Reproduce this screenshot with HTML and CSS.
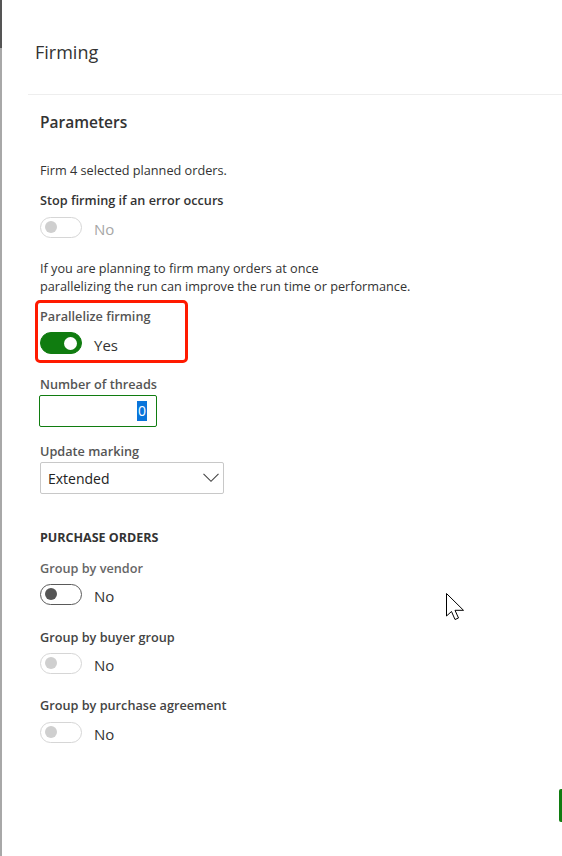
FILE: index.html
```html
<!DOCTYPE html>
<html>
<head>
<meta charset="utf-8">
<link rel="stylesheet" href="styles.css">
</head>
<body>
<div class="page">
  <div class="edge"></div>
  <div class="main">
    <h1 class="title">Firming</h1>
    <div class="divider"></div>
    <div class="section">
      <h2 class="sec-title">Parameters</h2>
      <p class="text t-firm">Firm 4 selected planned orders.</p>
      <div class="label l-stop dark">Stop firming if an error occurs</div>
      <div class="toggle-row r-stop">
        <span class="toggle off disabled"><span class="knob"></span></span>
        <span class="state muted">No</span>
      </div>
      <p class="text t-desc">If you are planning to firm many orders at once<br>parallelizing the run can improve the run time or performance.</p>
      <div class="highlight">
        <div class="label mid">Parallelize firming</div>
        <div class="toggle-row r-par">
          <span class="toggle on"><span class="knob"></span></span>
          <span class="state">Yes</span>
        </div>
      </div>
      <div class="label l-threads mid">Number of threads</div>
      <div class="input"><span class="sel">0</span></div>
      <div class="label l-update mid">Update marking</div>
      <div class="select">
        <span class="select-value">Extended</span>
        <svg class="chev" width="16" height="10" viewBox="0 0 16 10"><path d="M0.5 0.8 L8 8.3 L15.5 0.8" fill="none" stroke="#444" stroke-width="1.1"/></svg>
      </div>
      <div class="group-title">PURCHASE ORDERS</div>
      <div class="label l-g1 light">Group by vendor</div>
      <div class="toggle-row r-g">
        <span class="toggle off active"><span class="knob"></span></span>
        <span class="state">No</span>
      </div>
      <div class="label l-g2 dark2">Group by buyer group</div>
      <div class="toggle-row r-g">
        <span class="toggle off disabled"><span class="knob"></span></span>
        <span class="state">No</span>
      </div>
      <div class="label l-g3 dark2">Group by purchase agreement</div>
      <div class="toggle-row r-g3">
        <span class="toggle off disabled"><span class="knob"></span></span>
        <span class="state">No</span>
      </div>
    </div>
  </div>
  <svg class="cursor" width="20" height="28" viewBox="0 0 20 28"><path d="M0.5 0.5 L0.5 23 L5.5 18.5 L9 26.5 L12.5 25 L9 17.3 L17.5 17.3 Z" fill="#fff" stroke="#000" stroke-width="1" stroke-linejoin="miter"/></svg>
  <div class="greenbar"></div>
</div>
</body>
</html>
```
FILE: styles.css
```css
html, body {
  margin: 0;
  padding: 0;
  background: #fff;
}
body {
  font-family: "Open Sans", "Noto Sans", sans-serif;
  color: #333;
}
.page {
  position: relative;
  display: flex;
  width: 562px;
  height: 856px;
  overflow: hidden;
}
.edge {
  width: 2px;
  flex: none;
  background: linear-gradient(to bottom, #555 0, #555 48px, #a8a8a8 48px, #a8a8a8 100%);
}
.main {
  flex: 1;
  display: flex;
  flex-direction: column;
}
.title {
  margin: 38px 0 0 33px;
  font-size: 18px;
  line-height: 28px;
  font-weight: 500;
  color: #333;
}
.divider {
  margin: 28px 0 0 26px;
  height: 1px;
  background: #eeeeee;
}
.section {
  padding-left: 38px;
  display: flex;
  flex-direction: column;
  align-items: flex-start;
}
.sec-title {
  margin: 15px 0 0 0;
  font-size: 15.5px;
  line-height: 24px;
  font-weight: 600;
  color: #333;
}
.text {
  margin: 0;
  font-size: 12.7px;
  line-height: 18px;
  color: #333;
}
.t-firm { margin-top: 27px; }
.t-desc { margin-top: 21px; }
.label {
  font-size: 12.7px;
  line-height: 18px;
  font-weight: 600;
}
.dark { color: #333; }
.dark2 { color: #444; }
.mid { color: #555; }
.light { color: #666; }
.l-stop { margin-top: 12px; }
.l-threads { margin-top: 12px; }
.l-update { margin-top: 15px; }
.l-g1 { margin-top: 12px; }
.l-g2 { margin-top: 23px; }
.l-g3 { margin-top: 22px; }
.toggle-row {
  display: flex;
  align-items: center;
  height: 22px;
}
.r-stop { margin-top: 7px; }
.r-par { margin-top: 7px; }
.r-g { margin-top: 6px; }
.r-g3 { margin-top: 7px; }
.toggle {
  box-sizing: border-box;
  width: 42px;
  height: 21px;
  border-radius: 11px;
  border: 1px solid #d6d6d6;
  display: flex;
  align-items: center;
  padding: 0 4px;
}
.toggle .knob {
  width: 12px;
  height: 12px;
  border-radius: 50%;
  background: #cfcfcf;
}
.toggle.active {
  border-color: #5a5a5a;
}
.toggle.active .knob {
  background: #555;
}
.toggle.on {
  background: #107c10;
  border-color: #107c10;
  justify-content: flex-end;
  height: 22px;
}
.toggle.on .knob {
  background: #fff;
  width: 13px;
  height: 13px;
}
.state {
  margin-left: 12px;
  padding-top: 4px;
  font-size: 15px;
  line-height: 22px;
  color: #333;
}
.state.muted { color: #a6a6a6; }
.highlight {
  margin: 5px 0 0 -5px;
  box-sizing: border-box;
  width: 153px;
  border: 3px solid #ff1a00;
  border-radius: 5px;
  padding: 4px 0 6px 2px;
}
.input {
  box-sizing: border-box;
  margin: 2px 0 0 -1px;
  width: 118px;
  height: 32px;
  border: 1px solid #107c10;
  border-radius: 2px;
  display: flex;
  align-items: center;
  justify-content: flex-end;
  padding-right: 9px;
}
.sel {
  background: #0a74da;
  color: #fff;
  font-size: 14px;
  line-height: 20px;
  padding: 0 1px;
}
.select {
  box-sizing: border-box;
  margin-top: 2px;
  width: 184px;
  height: 32px;
  border: 1px solid #c8c8c8;
  border-radius: 2px;
  display: flex;
  align-items: center;
  justify-content: space-between;
  padding: 0 4px 0 7px;
}
.select-value {
  font-size: 14px;
  padding-top: 1px;
  color: #222;
}
.chev { display: block; }
.group-title {
  margin-top: 35px;
  font-size: 12.5px;
  line-height: 18px;
  font-weight: 700;
  color: #333;
}
.cursor {
  position: absolute;
  left: 446px;
  top: 593px;
}
.greenbar {
  position: absolute;
  left: 559px;
  top: 789px;
  width: 4px;
  height: 33px;
  background: #107c10;
  border-radius: 2px 0 0 2px;
}
```
